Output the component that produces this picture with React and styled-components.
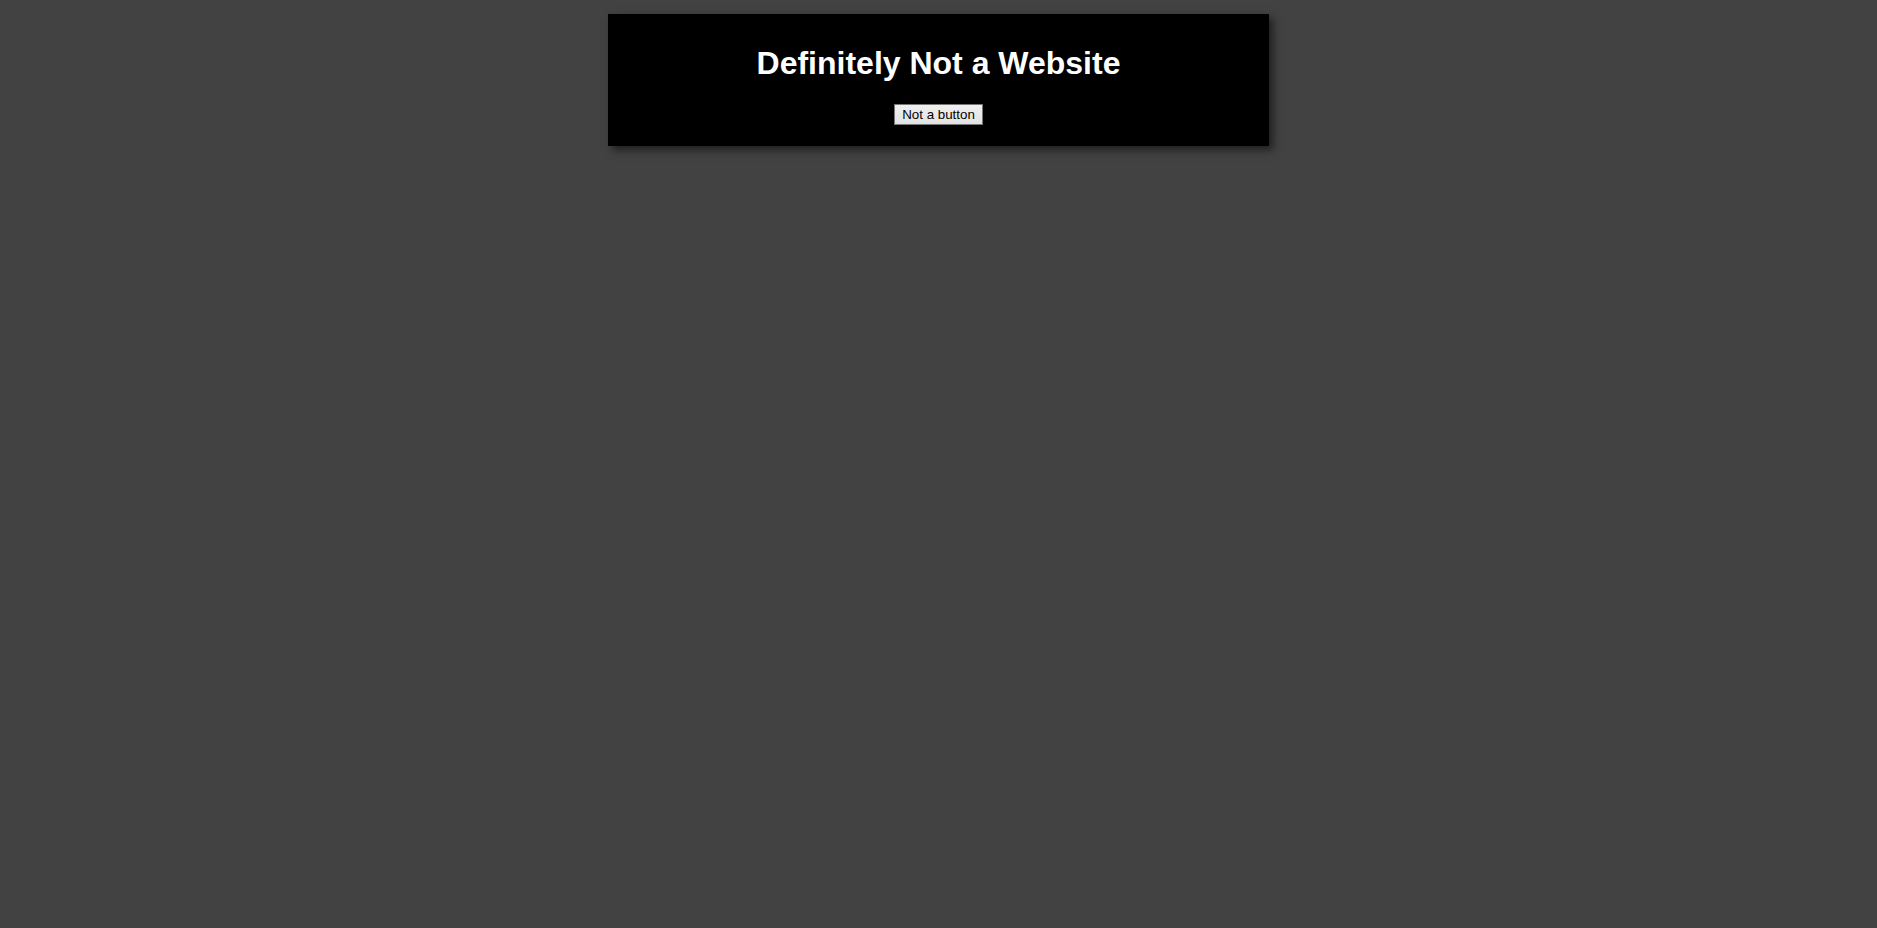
import styled, { createGlobalStyle } from "styled-components";

const GlobalStyle = createGlobalStyle`
  body {
    margin: 0;
    background: #424242;
    font-family: "Liberation Sans", Arial, sans-serif;
  }
`;

const App = () => {
  return (
    <>
      <GlobalStyle />
      <Page>
        <Card>
          <Title>Definitely Not a Website</Title>
          <FakeButton type="button">Not a button</FakeButton>
        </Card>
      </Page>
    </>
  );
};
export default App;

const Page = styled.div`
  min-height: 100vh;
  box-sizing: border-box;
  padding-top: 14px;
  display: flex;
  justify-content: center;
  align-items: flex-start;
`;

const Card = styled.div`
  width: 661px;
  box-sizing: border-box;
  padding: 31px 0 21px;
  background: #000;
  box-shadow: 4px 4px 8px rgba(0, 0, 0, 0.55);
  display: flex;
  flex-direction: column;
  align-items: center;
`;

const Title = styled.h1`
  margin: 0 0 22px;
  color: #fff;
  font-size: 32px;
  font-weight: bold;
  line-height: 37px;
`;

const FakeButton = styled.button`
  font-family: "Liberation Sans", Arial, sans-serif;
  font-size: 13.3333px;
  color: #000;
  padding: 2px 7px;
  border: 1px solid #767676;
  border-radius: 0;
  background: linear-gradient(#f0f0f0, #e2e2e2);
  cursor: default;
`;
